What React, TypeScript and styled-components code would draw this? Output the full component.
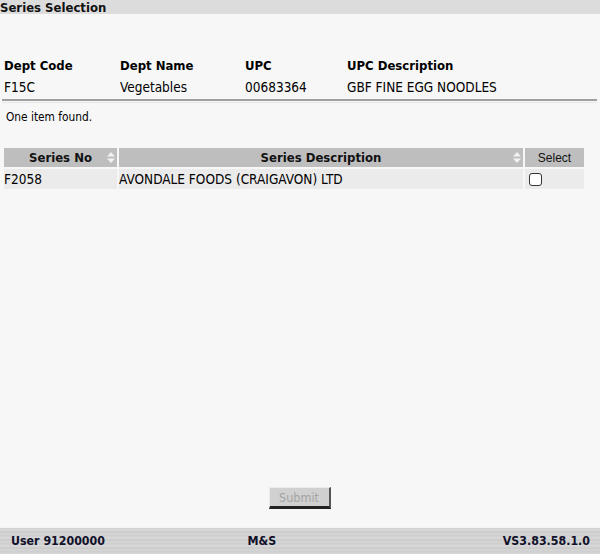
import React from "react";
import styled, { createGlobalStyle } from "styled-components";

const Global = createGlobalStyle`
  html, body { margin: 0; padding: 0; background: #f7f7f7; }
  body { font-family: "DejaVu Sans Condensed", "DejaVu Sans", sans-serif; color: #000; }
`;

const Page = styled.div`
  height: 554px;
  width: 600px;
  display: flex;
  flex-direction: column;
  background: #f7f7f7;
`;

const TitleBar = styled.div`
  height: 14px;
  background: #dcdcdc;
  font-weight: bold;
  font-size: 13px;
  line-height: 15px;
  color: #111;
`;

const Main = styled.div`
  flex: 1;
  display: flex;
  flex-direction: column;
`;

const InfoGrid = styled.div`
  display: grid;
  grid-template-columns: 116px 125px 102px 1fr;
  padding: 44px 0 0 4px;
  row-gap: 5px;
  font-size: 13.5px;
`;

const InfoHead = styled.div`
  font-weight: bold;
  font-size: 13px;
  line-height: 16px;
`;

const InfoVal = styled.div`
  line-height: 16px;
`;

const Rule = styled.div`
  margin: 4px 3px 0 2px;
  height: 1px;
  border-top: 2px solid #a0a0a0;
  border-bottom: 1px solid #e8e8e8;
`;

const Count = styled.div`
  font-size: 11.8px;
  padding: 7px 0 0 6px;
  line-height: 14px;
`;

const Table = styled.table`
  margin: 22px 0 0 2px;
  border-spacing: 2px;
  width: 584px;
  font-size: 13.5px;
`;

const Th = styled.th<{ $plain?: boolean; $w: number }>`
  background: #bebebe;
  height: 19px;
  padding: 0;
  width: ${(p) => p.$w}px;
  font-weight: ${(p) => (p.$plain ? "normal" : "bold")};
  font-family: ${(p) => (p.$plain ? '"Liberation Sans", Arial, sans-serif' : "inherit")};
  font-size: ${(p) => (p.$plain ? "12px" : "13px")};
  text-align: center;
  position: relative;
  color: #111;
`;

const SortIcon = styled.svg`
  position: absolute;
  right: 2px;
  top: 4px;
`;

const Td = styled.td<{ $pad?: boolean }>`
  background: #ebebeb;
  height: 20px;
  padding: 0 0 0 ${(p) => (p.$pad ? "4px" : "0")};
  text-align: left;
  vertical-align: middle;
  line-height: 20px;
`;

const Check = styled.span`
  display: block;
  width: 11px;
  height: 11px;
  border: 1px solid #333;
  border-radius: 3px;
  background: #fff;
`;

const ButtonRow = styled.div`
  margin-top: auto;
  display: flex;
  justify-content: center;
  padding: 0 0 18px 0;
`;

const SubmitBtn = styled.button`
  width: 62px;
  height: 22px;
  margin-left: -1px;
  background: #d0d0d0;
  color: #a4a4a4;
  font-family: "DejaVu Sans Condensed", "DejaVu Sans", sans-serif;
  font-size: 12.5px;
  border-style: solid;
  border-width: 1px 2px 3px 1px;
  border-color: #ececec #555 #222 #ececec;
  padding: 0;
`;

const Footer = styled.div`
  height: 26px;
  border-top: 1px solid #f4f4f4;
  background: repeating-linear-gradient(
    180deg,
    #cfcfcf 0px,
    #dadada 2px,
    #c9c9c9 4px,
    #d6d6d6 6px,
    #cdcdcd 8px
  );
  display: grid;
  grid-template-columns: 1fr auto 1fr;
  align-items: center;
  font-weight: bold;
  font-size: 12.3px;
  color: #10102a;
  padding: 0 10px 0 11px;
`;

const FootLeft = styled.div``;
const FootMid = styled.div`
  margin-left: -53px;
`;
const FootRight = styled.div`
  text-align: right;
`;

const Sort = () => (
  <SortIcon width="8" height="11" viewBox="0 0 8 11">
    <path d="M4 0 L8 4.5 L0 4.5 Z" fill="#f2f2f2" />
    <path d="M0 6.5 L8 6.5 L4 11 Z" fill="#f2f2f2" />
  </SortIcon>
);

export default function App() {
  return (
    <Page>
      <Global />
      <TitleBar>Series Selection</TitleBar>
      <Main>
        <InfoGrid>
          <InfoHead>Dept Code</InfoHead>
          <InfoHead>Dept Name</InfoHead>
          <InfoHead>UPC</InfoHead>
          <InfoHead>UPC Description</InfoHead>
          <InfoVal>F15C</InfoVal>
          <InfoVal>Vegetables</InfoVal>
          <InfoVal>00683364</InfoVal>
          <InfoVal>GBF FINE EGG NOODLES</InfoVal>
        </InfoGrid>
        <Rule />
        <Count>One item found.</Count>
        <Table>
          <thead>
            <tr>
              <Th $w={113}>
                Series No
                <Sort />
              </Th>
              <Th $w={404}>
                Series Description
                <Sort />
              </Th>
              <Th $w={59} $plain>
                Select
              </Th>
            </tr>
          </thead>
          <tbody>
            <tr>
              <Td>F2058</Td>
              <Td>AVONDALE FOODS (CRAIGAVON) LTD</Td>
              <Td $pad>
                <Check />
              </Td>
            </tr>
          </tbody>
        </Table>
        <ButtonRow>
          <SubmitBtn disabled>Submit</SubmitBtn>
        </ButtonRow>
      </Main>
      <Footer>
        <FootLeft>User 91200000</FootLeft>
        <FootMid>M&amp;S</FootMid>
        <FootRight>VS3.83.58.1.0</FootRight>
      </Footer>
    </Page>
  );
}
